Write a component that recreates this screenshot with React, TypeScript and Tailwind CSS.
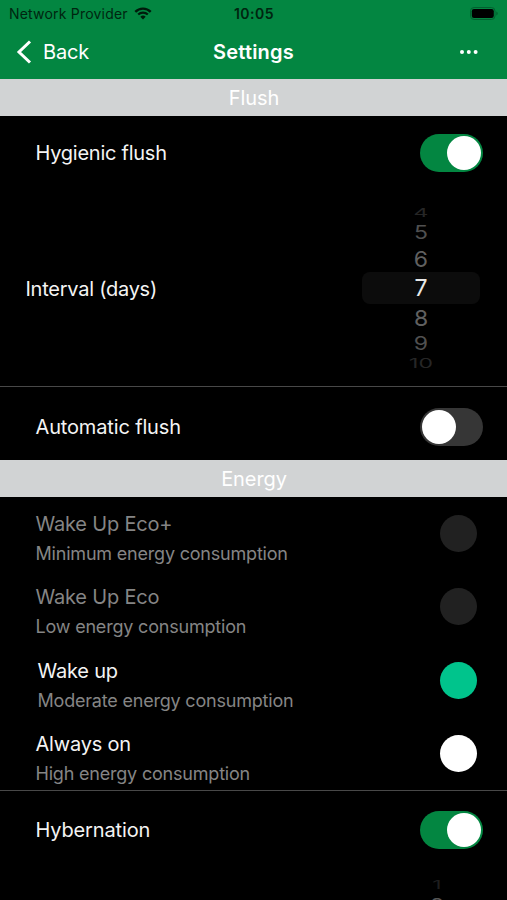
import { useState } from "react";

type WheelItem = {
  value: string;
  box: string;
  text: string;
};

type Mode = {
  name: string;
  description: string;
  indent: string;
  nameClass: string;
  dot: string;
};

const wheelItems: WheelItem[] = [
  { value: "4", box: "h-4 pt-0.5", text: "scale-y-[0.52] text-[#262626]" },
  { value: "5", box: "h-6 pt-px", text: "scale-y-[0.8] text-[#505050]" },
  { value: "6", box: "h-7 pt-0.5", text: "scale-y-[0.95] text-[#606060]" },
  { value: "7", box: "h-8 pt-px", text: "text-[#e8e8e8]" },
  { value: "8", box: "h-7 pt-px", text: "scale-y-[0.95] text-[#606060]" },
  { value: "9", box: "h-6 pt-px", text: "scale-y-[0.8] text-[#505050]" },
  { value: "10", box: "h-[14px]", text: "scale-y-[0.55] text-[#262626]" },
];

const modes: Mode[] = [
  {
    name: "Wake Up Eco+",
    description: "Minimum energy consumption",
    indent: "pl-[35.5px]",
    nameClass: "text-[#858585]",
    dot: "bg-[#212121]",
  },
  {
    name: "Wake Up Eco",
    description: "Low energy consumption",
    indent: "pl-[35.5px]",
    nameClass: "text-[#858585]",
    dot: "bg-[#212121]",
  },
  {
    name: "Wake up",
    description: "Moderate energy consumption",
    indent: "pl-[37.5px]",
    nameClass: "text-[#f4f4f4]",
    dot: "bg-[#00c48c]",
  },
  {
    name: "Always on",
    description: "High energy consumption",
    indent: "pl-[35.5px]",
    nameClass: "text-[#f4f4f4]",
    dot: "bg-white",
  },
];

function Toggle({ on, onChange }: { on: boolean; onChange: () => void }) {
  return (
    <button
      role="switch"
      aria-checked={on}
      onClick={onChange}
      className={`flex h-[38px] w-[62.5px] items-center rounded-full px-[2px] ${
        on ? "justify-end bg-[#038641]" : "justify-start bg-[#363636]"
      }`}
    >
      <span className="size-[34px] rounded-full bg-white" />
    </button>
  );
}

function SectionTitle({ title }: { title: string }) {
  return (
    <h2 className="flex h-[37px] shrink-0 items-center justify-center bg-[#d1d3d4] pl-px text-xl tracking-[-0.1px] text-white">
      {title}
    </h2>
  );
}

export default function App() {
  const [hygienic, setHygienic] = useState(true);
  const [automatic, setAutomatic] = useState(false);
  const [hybernation, setHybernation] = useState(true);

  return (
    <div className="flex h-[900px] w-[507px] flex-col overflow-hidden bg-black font-['Inter',sans-serif] text-[#f4f4f4]">
      {/* Header */}
      <header className="h-[79px] shrink-0 bg-[#038641]">
        {/* Status bar */}
        <div className="grid h-[27px] grid-cols-3 items-center px-[9px] text-[#002510]">
          <div className="flex items-center gap-1.5">
            <span className="text-sm tracking-[0.2px] whitespace-nowrap">Network Provider</span>
            <svg width="18" height="13" viewBox="0 0 19 14" fill="none" stroke="#001a0b">
              <path d="M1.2 5.2a11.8 11.8 0 0 1 16.6 0" strokeWidth="2.6" />
              <path d="M4.3 8.2a7.4 7.4 0 0 1 10.4 0" strokeWidth="2.3" />
              <path d="M9.5 13.5 6.6 10.6a4.1 4.1 0 0 1 5.8 0Z" fill="#001a0b" stroke="none" />
            </svg>
          </div>
          <span className="pl-px text-center text-sm font-semibold tracking-[0.5px]">10:05</span>
          <svg className="justify-self-end" width="28" height="13" viewBox="0 0 28 13">
            <rect x="0.5" y="0.5" width="24.5" height="12" rx="3.6" fill="none" stroke="#02602f" />
            <rect x="1.8" y="2" width="22" height="9" rx="2.2" fill="#000" />
            <path d="M26.3 4.5v4q1.4-.6 1.4-2t-1.4-2Z" fill="#02602f" />
          </svg>
        </div>

        {/* Navigation bar */}
        <div className="grid h-[50px] grid-cols-3 items-center px-4 text-white">
          <button className="flex items-center gap-[11px] text-xl tracking-[-0.2px]">
            <svg width="16" height="24" viewBox="0 0 16 24" fill="none" stroke="currentColor" strokeWidth="3">
              <path d="M14 1.5 3 12l11 10.5" />
            </svg>
            Back
          </button>
          <h1 className="text-center text-xl font-semibold tracking-[0.2px]">Settings</h1>
          <button aria-label="More" className="mr-[13px] justify-self-end">
            <svg width="18" height="4" viewBox="0 0 18 4" fill="currentColor">
              <circle cx="2" cy="2" r="2" />
              <circle cx="8.8" cy="2" r="2" />
              <circle cx="15.6" cy="2" r="2" />
            </svg>
          </button>
        </div>
      </header>

      {/* Flush */}
      <SectionTitle title="Flush" />
      <div className="flex h-[74px] shrink-0 items-center justify-between pr-[24.5px] pl-[35.5px]">
        <span className="text-xl tracking-[-0.25px]">Hygienic flush</span>
        <Toggle on={hygienic} onChange={() => setHygienic(!hygienic)} />
      </div>

      <div className="flex h-[196px] shrink-0 items-center justify-between pr-[27px] pb-[2px] pl-[25.5px]">
        <span className="pt-[3px] text-xl tracking-[-0.25px]">Interval (days)</span>
        <div className="flex w-[118px] flex-col">
          {wheelItems.map((item) => (
            <div
              key={item.value}
              className={`flex items-center justify-center rounded-lg ${item.box} ${
                item.value === "7" ? "bg-[#0c0c0c]" : ""
              }`}
            >
              <span className={`text-[23px] leading-none ${item.text}`}>{item.value}</span>
            </div>
          ))}
        </div>
      </div>

      <div className="flex h-[74px] shrink-0 items-center justify-between border-t border-[#484848] pt-[7px] pr-[24.5px] pl-[35.5px]">
        <span className="text-xl tracking-[-0.15px]">Automatic flush</span>
        <Toggle on={automatic} onChange={() => setAutomatic(!automatic)} />
      </div>

      {/* Energy */}
      <SectionTitle title="Energy" />
      <div className="flex h-[293px] shrink-0 flex-col">
        {modes.map((mode) => (
          <div
            key={mode.name}
            className={`flex flex-1 items-center justify-between pr-[30px] ${mode.indent}`}
          >
            <div className="pt-[11px]">
              <p className={`text-xl leading-[30px] tracking-[-0.2px] ${mode.nameClass}`}>{mode.name}</p>
              <p className="text-lg leading-[30px] tracking-[-0.2px] text-[#858585]">{mode.description}</p>
            </div>
            <span className={`size-[37px] rounded-full ${mode.dot}`} />
          </div>
        ))}
      </div>

      <div className="flex h-[79px] shrink-0 items-center justify-between border-t border-[#484848] pr-[24.5px] pl-[35.5px]">
        <span className="text-xl tracking-[-0.15px]">Hybernation</span>
        <Toggle on={hybernation} onChange={() => setHybernation(!hybernation)} />
      </div>

      {/* Top of the next wheel */}
      <div className="flex flex-col items-end gap-0.5 pt-[10px] pr-[62px] leading-none">
        <span className="flex h-3 w-4 items-center justify-center">
          <span className="scale-y-[0.5] text-[23px] leading-none text-[#1e1e1e]">1</span>
        </span>
        <span className="flex h-6 w-4 items-center justify-center">
          <span className="scale-y-[0.78] text-[23px] leading-none text-[#565656]">2</span>
        </span>
      </div>
    </div>
  );
}
